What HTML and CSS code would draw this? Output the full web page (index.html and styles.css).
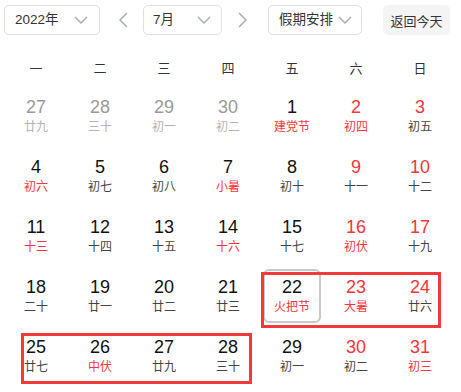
FILE: index.html
```html
<!DOCTYPE html>
<html lang="zh">
<head>
<meta charset="utf-8">
<link rel="stylesheet" href="styles.css">
</head>
<body>
<div class="page">
  <div class="toolbar">
    <div class="select year"><span>2022年</span><svg class="chev" viewBox="0 0 14 8"><path d="M1 1l6 6 6-6" fill="none" stroke="#a8abb2" stroke-width="1.4"/></svg></div>
    <svg class="arrow prev" viewBox="0 0 9 16"><path d="M8 1L1 8l7 7" fill="none" stroke="#a8abb2" stroke-width="1.5"/></svg>
    <div class="select month"><span>7月</span><svg class="chev" viewBox="0 0 14 8"><path d="M1 1l6 6 6-6" fill="none" stroke="#a8abb2" stroke-width="1.4"/></svg></div>
    <svg class="arrow next" viewBox="0 0 9 16"><path d="M1 1l7 7-7 7" fill="none" stroke="#a8abb2" stroke-width="1.5"/></svg>
    <div class="select holiday"><span>假期安排</span><svg class="chev" viewBox="0 0 14 8"><path d="M1 1l6 6 6-6" fill="none" stroke="#a8abb2" stroke-width="1.4"/></svg></div>
    <div class="today-btn">返回今天</div>
  </div>

  <div class="grid">
    <div class="wk">一</div><div class="wk">二</div><div class="wk">三</div><div class="wk">四</div><div class="wk">五</div><div class="wk">六</div><div class="wk">日</div>

    <div class="cell other"><div class="in"><span class="n">27</span><span class="l">廿九</span></div></div>
    <div class="cell other"><div class="in"><span class="n">28</span><span class="l">三十</span></div></div>
    <div class="cell other"><div class="in"><span class="n">29</span><span class="l">初一</span></div></div>
    <div class="cell other"><div class="in"><span class="n">30</span><span class="l">初二</span></div></div>
    <div class="cell"><div class="in"><span class="n">1</span><span class="l red">建党节</span></div></div>
    <div class="cell"><div class="in"><span class="n red">2</span><span class="l red">初四</span></div></div>
    <div class="cell"><div class="in"><span class="n red">3</span><span class="l">初五</span></div></div>

    <div class="cell"><div class="in"><span class="n">4</span><span class="l red">初六</span></div></div>
    <div class="cell"><div class="in"><span class="n">5</span><span class="l">初七</span></div></div>
    <div class="cell"><div class="in"><span class="n">6</span><span class="l">初八</span></div></div>
    <div class="cell"><div class="in"><span class="n">7</span><span class="l red">小暑</span></div></div>
    <div class="cell"><div class="in"><span class="n">8</span><span class="l">初十</span></div></div>
    <div class="cell"><div class="in"><span class="n red">9</span><span class="l">十一</span></div></div>
    <div class="cell"><div class="in"><span class="n red">10</span><span class="l">十二</span></div></div>

    <div class="cell"><div class="in"><span class="n">11</span><span class="l red">十三</span></div></div>
    <div class="cell"><div class="in"><span class="n">12</span><span class="l">十四</span></div></div>
    <div class="cell"><div class="in"><span class="n">13</span><span class="l">十五</span></div></div>
    <div class="cell"><div class="in"><span class="n">14</span><span class="l red">十六</span></div></div>
    <div class="cell"><div class="in"><span class="n">15</span><span class="l">十七</span></div></div>
    <div class="cell"><div class="in"><span class="n red">16</span><span class="l red">初伏</span></div></div>
    <div class="cell"><div class="in"><span class="n red">17</span><span class="l">十九</span></div></div>

    <div class="cell"><div class="in"><span class="n">18</span><span class="l">二十</span></div></div>
    <div class="cell"><div class="in"><span class="n">19</span><span class="l">廿一</span></div></div>
    <div class="cell"><div class="in"><span class="n">20</span><span class="l">廿二</span></div></div>
    <div class="cell"><div class="in"><span class="n">21</span><span class="l">廿三</span></div></div>
    <div class="cell today"><div class="in"><span class="n">22</span><span class="l red">火把节</span></div></div>
    <div class="cell"><div class="in"><span class="n red">23</span><span class="l red">大暑</span></div></div>
    <div class="cell"><div class="in"><span class="n red">24</span><span class="l">廿六</span></div></div>

    <div class="cell"><div class="in"><span class="n">25</span><span class="l">廿七</span></div></div>
    <div class="cell"><div class="in"><span class="n">26</span><span class="l red">中伏</span></div></div>
    <div class="cell"><div class="in"><span class="n">27</span><span class="l">廿九</span></div></div>
    <div class="cell"><div class="in"><span class="n">28</span><span class="l">三十</span></div></div>
    <div class="cell"><div class="in"><span class="n">29</span><span class="l">初一</span></div></div>
    <div class="cell"><div class="in"><span class="n red">30</span><span class="l">初二</span></div></div>
    <div class="cell"><div class="in"><span class="n red">31</span><span class="l red">初三</span></div></div>
  </div>

  <div class="mark mark-a"></div>
  <div class="mark mark-b"></div>
</div>
</body>
</html>
```

FILE: styles.css
```css
html, body {
  margin: 0;
  padding: 0;
  background: #fff;
}
body {
  font-family: "Liberation Sans", "Noto Sans CJK SC", sans-serif;
  color: #1f1f1f;
}
.page {
  position: relative;
  width: 461px;
  height: 392px;
  overflow: hidden;
  padding: 5px 0 0 4px;
  box-sizing: border-box;
}
.toolbar {
  display: flex;
  align-items: center;
  height: 30px;
}
.select {
  box-sizing: border-box;
  height: 30px;
  border: 1px solid #dcdfe6;
  border-radius: 5px;
  display: flex;
  align-items: center;
  justify-content: space-between;
  font-size: 13.5px;
  color: #333;
  font-family: "Liberation Sans", "Noto Sans CJK SC", sans-serif;
}
.select span { line-height: 1; }
.chev {
  width: 14px;
  height: 8px;
  display: block;
}
.year {
  width: 96px;
  padding: 0 11px 0 10px;
}
.month {
  width: 79px;
  padding: 0 10px 0 9px;
}
.holiday {
  width: 94px;
  padding: 0 9px 0 10px;
}
.arrow {
  width: 9px;
  height: 16px;
  display: block;
}
.prev { margin: 0 15px 0 19px; }
.next { margin: 0 21px 0 16px; }
.today-btn {
  margin-left: 21px;
  width: 67px;
  height: 30px;
  border-radius: 5px;
  background: #f4f4f5;
  color: #333;
  font-size: 13px;
  display: flex;
  align-items: center;
  justify-content: center;
}
.grid {
  margin-top: 13px;
  display: grid;
  grid-template-columns: repeat(7, 64px);
  grid-auto-rows: 60px;
  grid-template-rows: 38px;
}
.wk {
  display: flex;
  align-items: center;
  justify-content: center;
  font-size: 13px;
  color: #333;
  padding-top: 0;
}
.cell {
  padding: 3px;
  box-sizing: border-box;
}
.in {
  box-sizing: border-box;
  height: 100%;
  border: 2px solid transparent;
  border-radius: 6px;
  display: flex;
  flex-direction: column;
  align-items: center;
  justify-content: center;
}
.today .in {
  border-color: #c8c9cf;
}
.n {
  font-size: 18px;
  line-height: 20px;
  color: #111;
}
.l {
  margin-top: 2px;
  font-size: 12px;
  line-height: 16px;
  color: #444;
}
.red { color: #f5353c; }
.other .n { color: #999; }
.other .l { color: #b3b3b3; }
.mark {
  position: absolute;
  border: 3px solid #f23a3a;
  box-sizing: border-box;
}
.mark-a {
  left: 261px;
  top: 272px;
  width: 180px;
  height: 56px;
}
.mark-b {
  left: 21px;
  top: 333px;
  width: 231px;
  height: 51px;
}
```
